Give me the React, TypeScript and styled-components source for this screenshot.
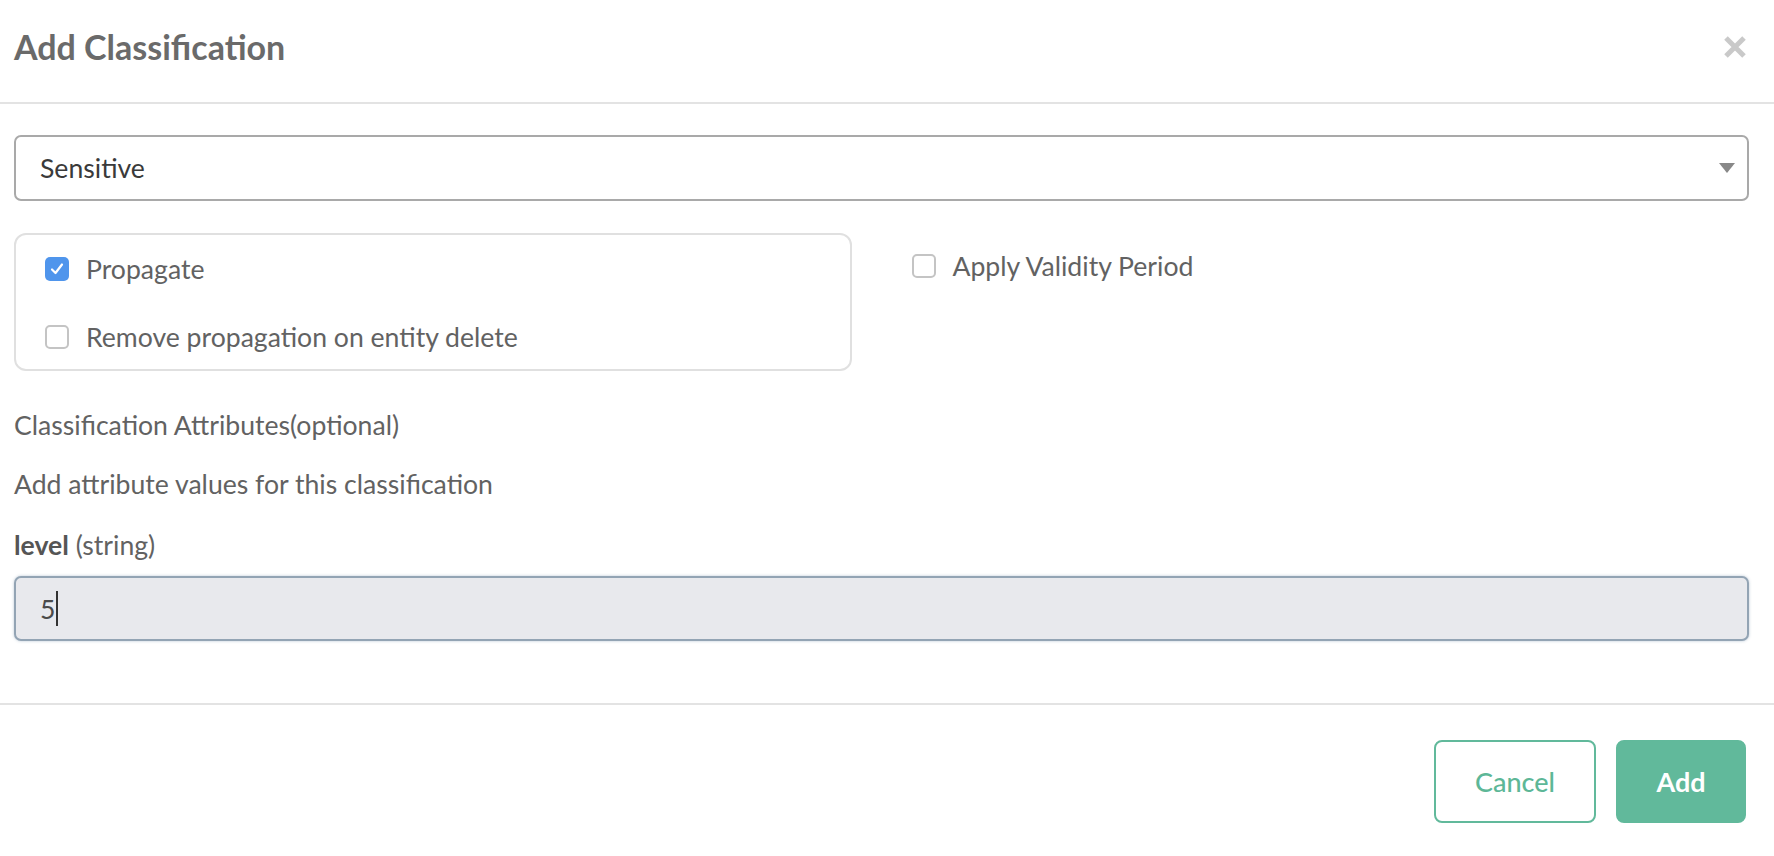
import React from "react";
import styled, { createGlobalStyle } from "styled-components";

const Global = createGlobalStyle`
  html, body { margin: 0; padding: 0; background: #ffffff; }
  body { font-family: Lato, "Liberation Sans", sans-serif; }
  * { box-sizing: border-box; }
`;

const Modal = styled.div`
  width: 1774px;
  height: 856px;
  background: #fff;
  display: flex;
  flex-direction: column;
  overflow: hidden;
`;

const Header = styled.header`
  height: 104px;
  display: flex;
  align-items: center;
  justify-content: space-between;
  padding: 0 27px 10px 14px;
  border-bottom: 2px solid #e3e3e3;
`;

const Title = styled.h4`
  margin: 0;
  font-size: 34px;
  font-weight: 700;
  color: #6a6a6a;
  letter-spacing: 0;
`;

const CloseButton = styled.button`
  border: 0;
  background: transparent;
  padding: 0;
  width: 24px;
  height: 24px;
  display: flex;
  margin-top: 2px;
  cursor: pointer;
`;

const Body = styled.div`
  padding: 31px 25px 0 14px;
  display: flex;
  flex-direction: column;
  flex: 1;
`;

const SelectBox = styled.div`
  height: 66px;
  border: 2px solid #a9a9a9;
  border-radius: 7px;
  display: flex;
  align-items: center;
  justify-content: space-between;
  padding: 0 12px 0 24px;
  font-size: 26.6px;
  color: #3a3a3a;
`;

const OptionsRow = styled.div`
  margin-top: 32px;
  display: grid;
  grid-template-columns: 1fr 1fr;
`;

const OptionsCol = styled.div<{ $second?: boolean }>`
  padding-right: ${(p) => (p.$second ? "0" : "30px")};
  padding-left: ${(p) => (p.$second ? "30px" : "0")};
`;

const CheckGroup = styled.div`
  height: 138px;
  border: 2px solid #e0e0e0;
  border-radius: 12px;
  padding: 21px 0 0 29px;
  display: flex;
  flex-direction: column;
  gap: 42px;
`;

const CheckRow = styled.label`
  display: flex;
  align-items: center;
  gap: 17px;
  font-size: 26.6px;
  color: #626262;
  height: 26px;
  cursor: pointer;
`;

const Box = styled.span<{ $checked?: boolean }>`
  width: 24px;
  height: 24px;
  border-radius: 5px;
  flex: none;
  display: flex;
  align-items: center;
  justify-content: center;
  background: ${(p) => (p.$checked ? "#4f95ec" : "#fff")};
  border: ${(p) => (p.$checked ? "none" : "2px solid #c4c4c4")};
`;

const ValidityRow = styled.div`
  padding-top: 20px;
`;

const Label = styled.div<{ $mt: number }>`
  margin-top: ${(p) => p.$mt}px;
  font-size: 26.6px;
  line-height: 40px;
  color: #626262;
`;

const Strong = styled.b`
  font-weight: 700;
  color: #555;
`;

const FakeInput = styled.div`
  margin-top: 11px;
  height: 65px;
  background: #e8e9ed;
  border: 2px solid #93a4b4;
  border-radius: 7px;
  box-shadow: 0 0 3px rgba(100, 130, 160, 0.45);
  display: flex;
  align-items: center;
  padding-left: 24px;
  font-size: 26.6px;
  color: #4a4a4a;
`;

const Caret = styled.span`
  display: inline-block;
  width: 2px;
  height: 35px;
  background: #333;
  margin-left: 1px;
`;

const Footer = styled.footer`
  height: 153px;
  border-top: 2px solid #e3e3e3;
  display: flex;
  justify-content: flex-end;
  align-items: flex-start;
  gap: 20px;
  padding: 35px 28px 0 0;
`;

const Btn = styled.button<{ $primary?: boolean }>`
  height: 83px;
  width: ${(p) => (p.$primary ? "130px" : "162px")};
  border-radius: 8px;
  font-family: Lato, "Liberation Sans", sans-serif;
  font-size: 27px;
  font-weight: ${(p) => (p.$primary ? 700 : 500)};
  color: ${(p) => (p.$primary ? "#ffffff" : "#5db797")};
  background: ${(p) => (p.$primary ? "#61b99b" : "#ffffff")};
  border: 2px solid #61b99b;
  cursor: pointer;
`;

const Check = () => (
  <svg width="16" height="16" viewBox="0 0 16 16">
    <path d="M3 8.5 L6.5 12 L13 3.5" fill="none" stroke="#fff" strokeWidth="2.2" strokeLinecap="round" strokeLinejoin="round" />
  </svg>
);

export default function App() {
  return (
    <>
      <Global />
      <Modal>
        <Header>
          <Title>Add Classification</Title>
          <CloseButton aria-label="Close">
            <svg width="24" height="24" viewBox="0 0 24 24">
              <path d="M3 3 L21 21 M21 3 L3 21" stroke="#c9c9c9" strokeWidth="5" strokeLinecap="butt" />
            </svg>
          </CloseButton>
        </Header>
        <Body>
          <SelectBox>
            <span>Sensitive</span>
            <svg width="16" height="10" viewBox="0 0 16 10">
              <path d="M0 0 H16 L8 10 Z" fill="#888" />
            </svg>
          </SelectBox>
          <OptionsRow>
            <OptionsCol>
              <CheckGroup>
                <CheckRow>
                  <Box $checked>
                    <Check />
                  </Box>
                  Propagate
                </CheckRow>
                <CheckRow>
                  <Box />
                  Remove propagation on entity delete
                </CheckRow>
              </CheckGroup>
            </OptionsCol>
            <OptionsCol $second>
              <ValidityRow>
                <CheckRow>
                  <Box />
                  Apply Validity Period
                </CheckRow>
              </ValidityRow>
            </OptionsCol>
          </OptionsRow>
          <Label $mt={34}>Classification Attributes(optional)</Label>
          <Label $mt={19}>Add attribute values for this classification</Label>
          <Label $mt={21}>
            <Strong>level</Strong> (string)
          </Label>
          <FakeInput>
            5<Caret />
          </FakeInput>
        </Body>
        <Footer>
          <Btn>Cancel</Btn>
          <Btn $primary>Add</Btn>
        </Footer>
      </Modal>
    </>
  );
}
